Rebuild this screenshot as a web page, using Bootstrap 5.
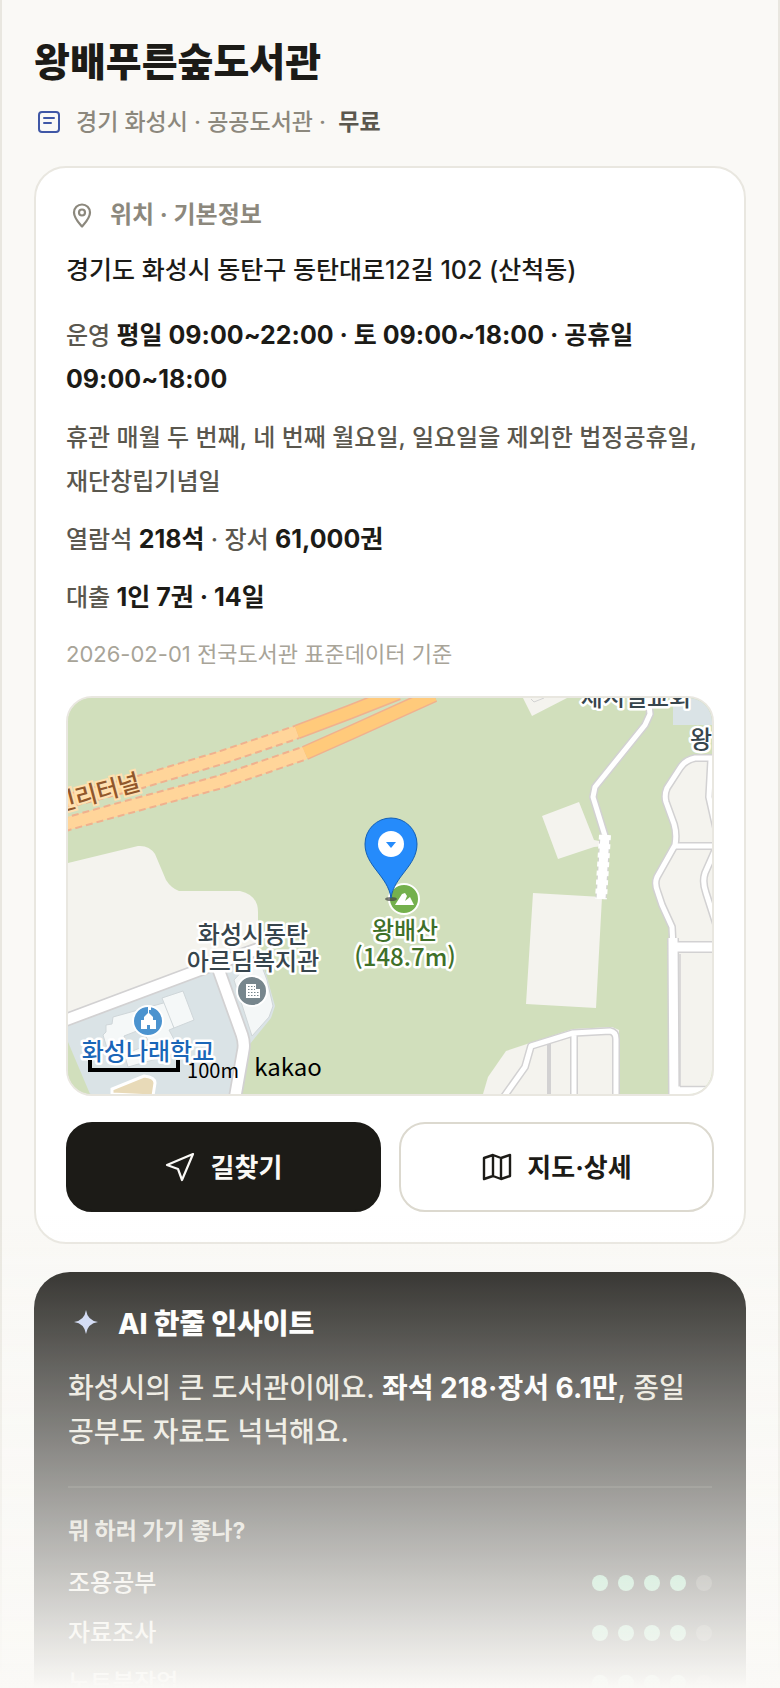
<!DOCTYPE html>
<html lang="ko">
<head>
<meta charset="utf-8">
<meta name="viewport" content="width=device-width, initial-scale=1">
<title>왕배푸른숲도서관</title>
<link href="https://cdn.jsdelivr.net/npm/bootstrap@5.3.0/dist/css/bootstrap.min.css" rel="stylesheet">
<style>
  :root { --paper: #faf9f6; --ink: #1c1b17; --line: #e9e7e0; --muted: #8c887d; --soft: #5a574e; }
  body { background: var(--paper); color: var(--ink); font-family: Inter, "Noto Sans CJK KR", sans-serif; font-weight: 500; word-break: keep-all; }
  .page { height: 100vh; overflow: hidden; padding: 38px 32px 0; border: solid var(--line); border-width: 0 2px; }
  .lib-title { font-size: 39px; line-height: 48px; font-weight: 800; margin: 0 0 20px; }
  .meta { font-size: 23px; line-height: 32px; color: var(--muted); gap: 12px; margin-bottom: 28px; }
  .meta strong { color: var(--soft); font-weight: 600; margin-left: 6px; }
  .info { background: #fff; border: 2px solid var(--line); border-radius: 32px; padding: 30px; margin-bottom: 28px; }
  .sec-title { font-size: 24px; line-height: 34px; font-weight: 700; color: var(--muted); gap: 12px; margin: 0 0 18px; }
  .addr { font-size: 25px; line-height: 40px; margin: 0 0 24px; }
  .facts p { font-size: 24px; line-height: 44px; color: var(--soft); margin: 0 0 14px; }
  .facts strong { color: var(--ink); font-weight: 700; font-size: 25px; line-height: 40px; }
  .facts .source { font-size: 22px; line-height: 40px; font-weight: 400; color: #a8a498; margin: 0 0 22px; }
  .map-box { height: 400px; border: 2px solid var(--line); border-radius: 26px; overflow: hidden; background: #d1dfbc; margin-bottom: 26px; }
  .map-box svg { width: 100%; height: 100%; display: block; }
  .map-box text { font-family: "Noto Sans CJK KR", sans-serif; font-size: 24px; font-weight: 500; text-anchor: middle; }
  .map-box .scale-text { font-size: 20px; font-weight: 400; }
  .map-box .logo-text { font-weight: 400; }
  .halo text { stroke: #fff; stroke-width: 5px; paint-order: stroke; stroke-linejoin: round; }
  .actions { gap: 18px; }
  .actions .btn { flex: 1 1 0; height: 90px; border-radius: 26px; border: 2px solid #dcd9cf; background: #fff; color: var(--ink); font-size: 26px; font-weight: 700; gap: 14px; }
  .actions .btn-go { background: var(--ink); border-color: var(--ink); color: var(--paper); }
  .insight { background: var(--ink); border-radius: 36px; padding: 34px; }
  .insight h2 { font-size: 28px; line-height: 36px; font-weight: 800; color: #fff; gap: 16px; margin: 0 0 24px; }
  .insight .summary { font-size: 28px; line-height: 44px; color: #e8e5da; margin: 0; }
  .insight .summary strong { color: #fff; font-weight: 700; }
  .insight hr { border-top: 2px solid #33322d; opacity: 1; margin: 32px 0 26px; }
  .insight h3 { font-size: 23px; line-height: 34px; font-weight: 700; color: #d3d0c5; margin: 0 0 10px; }
  .insight li { font-size: 24px; line-height: 50px; color: #f0eee6; }
  .dots { gap: 10px; }
  .dots i { width: 16px; height: 16px; border-radius: 50%; background: #7fd1a5; }
  .dots i.off { background: #4a4943; }
  .fade-out { height: 480px; background: linear-gradient(rgba(250,249,246,0), #faf9f6); pointer-events: none; }
</style>
</head>
<body>
<main class="page">
  <header>
    <h1 class="lib-title">왕배푸른숲도서관</h1>
    <div class="meta d-flex align-items-center">
      <svg width="30" height="30" viewBox="0 0 30 30" fill="none" stroke="#3f57a6" stroke-width="2" stroke-linecap="round"><rect x="5" y="5" width="20" height="20" rx="3"/><path d="M10 11h10M10 16h7"/></svg>
      <span>경기 화성시 · 공공도서관 · <strong>무료</strong></span>
    </div>
  </header>

  <section class="info">
    <h2 class="sec-title d-flex align-items-center">
      <svg width="32" height="32" viewBox="0 0 32 32" fill="none" stroke="#8c887d" stroke-width="2.2" stroke-linejoin="round"><path d="M16 27.500C14 25 8 19.500 8 13.500a8 8 0 0 1 16 0C24 19.500 18 25 16 27.500Z"/><circle cx="16" cy="13.500" r="3"/></svg>
      위치 · 기본정보
    </h2>
    <p class="addr">경기도 화성시 동탄구 동탄대로12길 102 (산척동)</p>
    <div class="facts">
      <p>운영 <strong>평일 09:00~22:00 · 토 09:00~18:00 · 공휴일 09:00~18:00</strong></p>
      <p>휴관 매월 두 번째, 네 번째 월요일, 일요일을 제외한 법정공휴일, 재단창립기념일</p>
      <p>열람석 <strong>218석</strong> · 장서 <strong>61,000권</strong></p>
      <p>대출 <strong>1인 7권 · 14일</strong></p>
      <p class="source">2026-02-01 전국도서관 표준데이터 기준</p>
    </div>

    <div class="map-box">
      <svg viewBox="0 0 644 396" preserveAspectRatio="xMidYMid slice" role="img" aria-label="도서관 주변 지도">
        <rect width="644" height="396" fill="#d1dfbc"/>
        <!-- plots -->
        <g fill="#f4f3ee">
          <path d="M0 165 70 148Q81 147 87 156L98 182Q103 190 111 193L172 193Q190 197 190 214V250L142 268 0 321Z"/>
          <path d="M455 0 464 18 499 0ZM474 118 511 104 526 142 536 144V148L526 149 490 161ZM465 195 534 199 528 310 458 306Z"/>
          <path d="M415 396 420 379 438 353 462 345 505 331 544 329 551 332V396Z"/>
          <path d="M644 60H625L612 70 597 92V102L607 127V147L587 185 594 209 604 232 606 396H644Z"/>
        </g>
        <path d="M463 1 466 4 476 0" fill="none" stroke="#d2d2d2"/>
        <g fill="#dae3e6">
          <path d="M605 0H644V27H605Z"/>
          <path d="M0 328 145 272 173 342 164 396H22L0 344Z"/>
          <path d="M152 270 188 245Q192 262 198 276L207 308 203 320 182 346Z"/>
        </g>
        <path d="M166 282 190 256Q194 270 199 282L205 308 201 319 184 338Z" fill="#f4f7f7" stroke="#d0d6d8"/>
        <g fill="#f5f8f8" stroke="#cfd6d9">
          <path fill-rule="evenodd" d="M35 337 38 334 38 327 44 326 45 319 99 304 106 330 101 332 109 347 110 355 60 369 56 355 39 350ZM56 338 74 331 82 346 62 354Z"/>
          <path d="M94 300 115 293 126 322 106 330Z"/>
        </g>
        <path d="M44 396V391L76 378Q87 379 87 385L85 398Z" fill="#e8dab8" stroke="#fff" stroke-width="3"/>
        <!-- streets: grey casing, then white surface -->
        <g fill="none" stroke="#d2d1d2" stroke-linejoin="round">
          <g stroke-width="14"><path d="M-5 323 142 268 190 251M150 270 174 337Q177 346 175 354L167 400"/></g>
          <g stroke-width="8">
            <path d="M580-2 582 16 577 27 527 89 525 99 537 138"/>
            <path d="M650 60H627Q617 62 612 70L599 90Q596 97 598 104L606 126Q609 136 607 147L589 179Q586 186 590 195L594 207 604 229 605 249"/>
            <path d="M607 148H650M643 62 641 99 648 130M648 150 637 175Q634 184 638 195L648 226"/>
            <path d="M435 400 457 369 463 348 505 335 542 333Q548 334 548 341V400M506 335V400"/>
          </g>
          <path d="M481 345V400" stroke-width="4"/>
          <path d="M605 240 606 400M605 249H650" stroke-width="12"/>
        </g>
        <g fill="none" stroke="#fff" stroke-linejoin="round">
          <g stroke-width="10.500"><path d="M-5 323 142 268 190 251M150 270 174 337Q177 346 175 354L167 400"/></g>
          <g stroke-width="5">
            <path d="M580-2 582 16 577 27 527 89 525 99 537 138"/>
            <path d="M650 60H627Q617 62 612 70L599 90Q596 97 598 104L606 126Q609 136 607 147L589 179Q586 186 590 195L594 207 604 229 605 249"/>
            <path d="M607 148H650M643 62 641 99 648 130M648 150 637 175Q634 184 638 195L648 226"/>
            <path d="M435 400 457 369 463 348 505 335 542 333Q548 334 548 341V400M506 335V400"/>
          </g>
          <path d="M605 240 606 400M605 249H650M606 393H650" stroke-width="9"/>
          <path d="M537 137 533 201" stroke="#d2d1d2" stroke-width="11"/>
          <path d="M537 137 533 201" stroke-width="12" stroke-dasharray="5 4"/>
          <path d="M537 137 533 201" stroke-width="9"/>
        </g>
        <path d="M612 388.500H642M612 388V256" stroke="#d2d1d2" stroke-width="1.500" fill="none"/>
        <!-- expressway and its tunnel section -->
        <g fill="none">
          <path d="M-5 104 72 84 152 60 229 34M-5 127 45 113 152 84 237 55" stroke="#ffd59a" stroke-width="13"/>
          <path d="M-5 104 72 84 152 60 229 34M-5 127 45 113 152 84 237 55" stroke="#f0b18e" stroke-width="15" stroke-dasharray="7 4"/>
          <path d="M229 34 282 14 330-5M237 55 282 35 366-3" stroke="#f0b18e" stroke-width="15"/>
          <path d="M-5 104 72 84 152 60 229 34M-5 127 45 113 152 84 237 55" stroke="#ffd59a" stroke-width="11"/>
          <path d="M229 34 282 14 330-5M237 55 282 35 366-3" stroke="#ffca7b" stroke-width="12"/>
        </g>
        <text transform="translate(31 103) rotate(-15)" fill="#91572b" stroke="#ffe0b0" stroke-width="4" paint-order="stroke">신리터널</text>
        <!-- place markers -->
        <g stroke="#fff" stroke-width="2">
          <circle cx="184" cy="293" r="15" fill="#77868d"/>
          <circle cx="80" cy="323" r="15" fill="#4b93cf"/>
          <circle cx="336" cy="201" r="15" fill="#74b04d"/>
        </g>
        <path d="M178 286H188V291H192V300H178Z" fill="#fff"/>
        <path d="M180 288.500H187M180 291.500H187M180 294.500H191M180 297.500H191" stroke="#77868d" stroke-width="1.200" stroke-dasharray="1.500 1.500"/>
        <path d="M73 331V322H76V319L80 315V314H81V315L85 319V322H88V331H82V327H79V331ZM80 314V309H83V312H81V314Z" fill="#fff"/>
        <path d="M327 207 334 196 337 195 339 198 337 203 342 199 346 207Z" fill="#fff"/>
        <g class="halo">
          <g fill="#37454d"><text x="185" y="245">화성시동탄</text><text x="185" y="272">아르딤복지관</text><text x="568" y="8">제시일교회</text><text x="633" y="50">왕</text></g>
          <g fill="#3f7029"><text x="337" y="241">왕배산</text><text x="337" y="268">(148.7m)</text></g>
          <text x="80" y="362" fill="#1a66b8">화성나래학교</text>
        </g>
        <path d="M22 362V372H110V362" fill="none" stroke="#000" stroke-width="4"/>
        <text x="145" y="380" class="scale-text">100m</text>
        <text x="220" y="378" class="logo-text">kakao</text>
        <ellipse cx="323" cy="201" rx="6" ry="2" fill="#444" opacity=".7"/>
        <path d="M323 200C320 178 297 168 297 146a26 26 0 0 1 52 0C349 168 326 178 323 200Z" fill="#258bfb" stroke="#1460b5"/>
        <circle cx="323" cy="146" r="13" fill="#fff"/><path d="M318 144H328L323 150Z" fill="#258bfb"/>
      </svg>
    </div>

    <div class="actions d-flex">
      <button type="button" class="btn btn-go d-flex align-items-center justify-content-center">
        <svg width="32" height="32" viewBox="0 0 32 32" fill="none" stroke="currentColor" stroke-width="2.200" stroke-linejoin="round"><path d="M28 3 2 14 13 18 17 29Z"/></svg>
        길찾기
      </button>
      <button type="button" class="btn d-flex align-items-center justify-content-center">
        <svg width="32" height="32" viewBox="0 0 32 32" fill="none" stroke="currentColor" stroke-width="2.400" stroke-linejoin="round"><path d="M3 7 12 4 20 7 29 4V25L20 28 12 25 3 28ZM12 4V25M20 7V28"/></svg>
        지도·상세
      </button>
    </div>
  </section>

  <section class="insight">
    <h2 class="d-flex align-items-center">
      <svg width="34" height="34" viewBox="0 0 34 34"><path d="M18 3Q19.500 13.500 30 15Q19.500 16.500 18 27Q16.500 16.500 6 15Q16.500 13.500 18 3Z" fill="#c9d4f5"/></svg>
      AI 한줄 인사이트
    </h2>
    <p class="summary">화성시의 큰 도서관이에요. <strong>좌석 218·장서 6.1만</strong>, 종일 공부도 자료도 넉넉해요.</p>
    <hr>
    <h3>뭐 하러 가기 좋나?</h3>
    <ul class="list-unstyled mb-0">
      <li class="d-flex justify-content-between align-items-center">조용공부<span class="dots d-flex"><i></i><i></i><i></i><i></i><i class="off"></i></span></li>
      <li class="d-flex justify-content-between align-items-center">자료조사<span class="dots d-flex"><i></i><i></i><i></i><i></i><i class="off"></i></span></li>
      <li class="d-flex justify-content-between align-items-center">노트북작업<span class="dots d-flex"><i></i><i></i><i></i><i></i><i class="off"></i></span></li>
    </ul>
  </section>
</main>
<div class="fade-out fixed-bottom"></div>
<script src="https://cdn.jsdelivr.net/npm/bootstrap@5.3.0/dist/js/bootstrap.bundle.min.js"></script>
</body>
</html>
